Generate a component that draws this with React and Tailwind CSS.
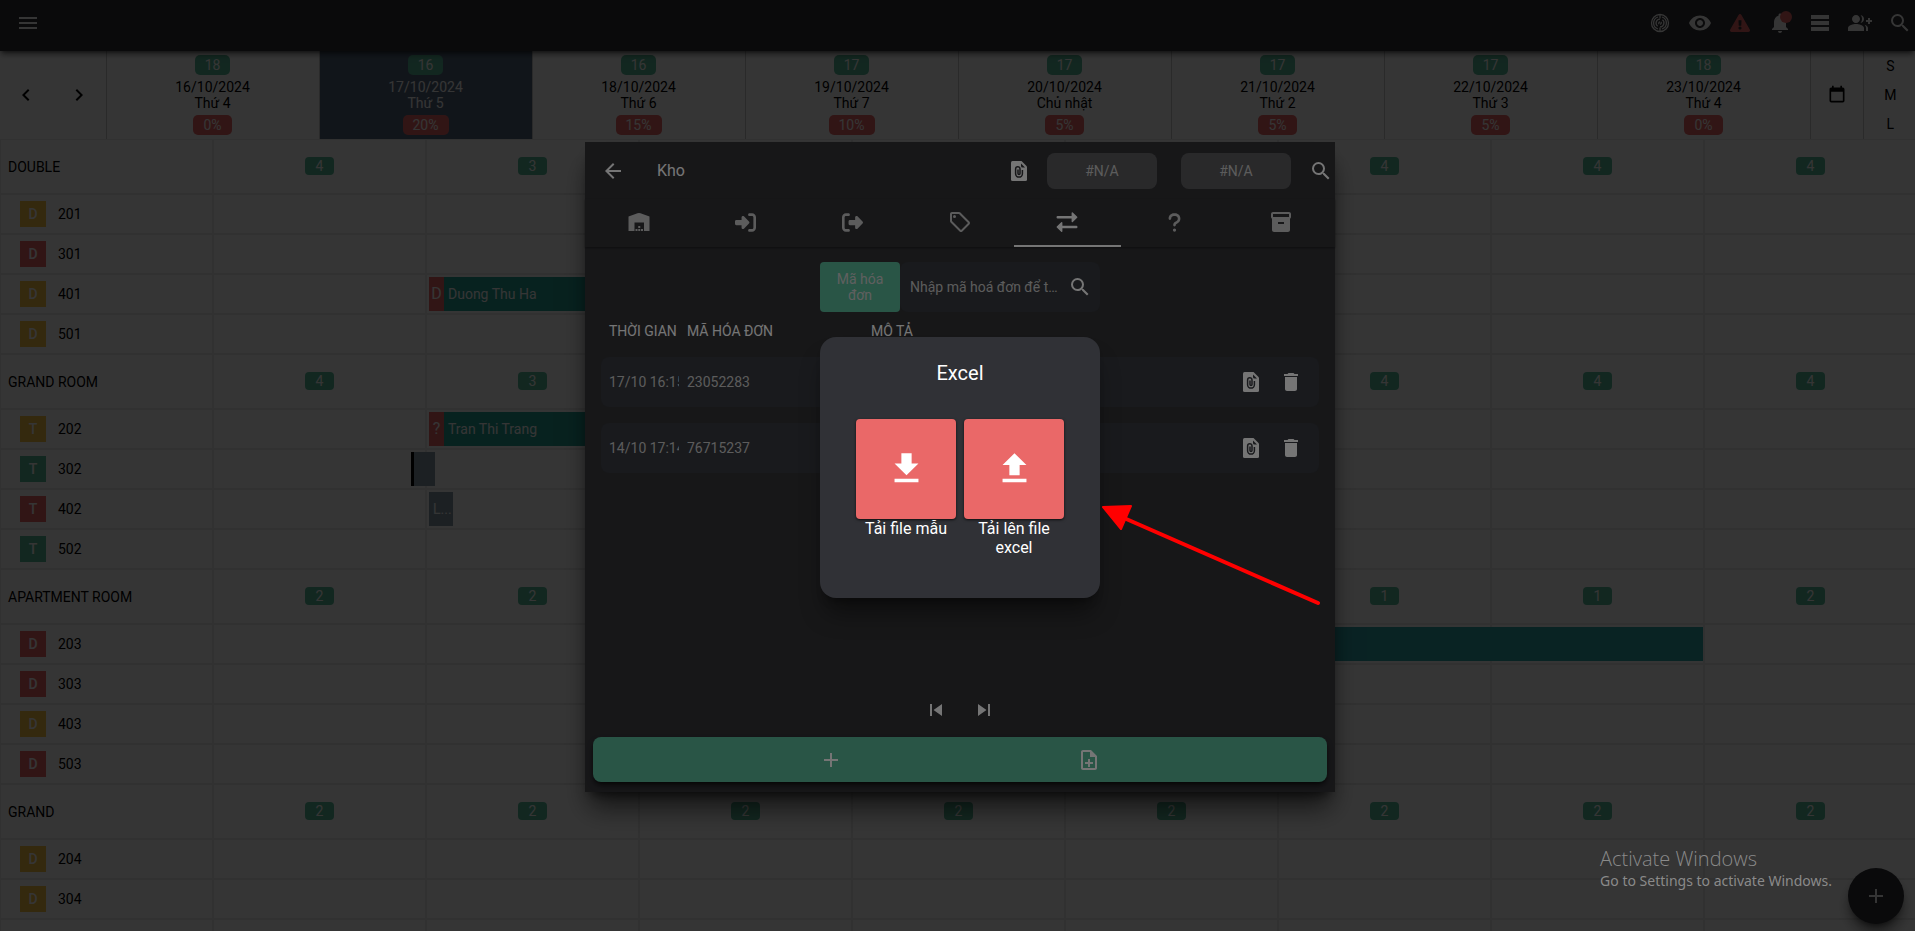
"use client";

// Purpose: Room calendar with the warehouse dialog and its Excel menu.

import {
  MdAdd,
  MdArrowBack,
  MdChevronLeft,
  MdChevronRight,
  MdDelete,
  MdFileDownload,
  MdFileUpload,
  MdGroupAdd,
  MdInventory2,
  MdMenu,
  MdNotifications,
  MdOutlineLocalOffer,
  MdOutlineNoteAdd,
  MdRemoveRedEye,
  MdSearch,
  MdSkipNext,
  MdSkipPrevious,
  MdTableRows,
} from "react-icons/md";
import { FaExclamationTriangle } from "react-icons/fa";
import {
  FaQuestion,
  FaRightFromBracket,
  FaRightToBracket,
} from "react-icons/fa6";

const days = [
  { date: "16/10/2024", name: "Thứ 4", free: 18, rate: "0%" },
  { date: "17/10/2024", name: "Thứ 5", free: 16, rate: "20%", today: true },
  { date: "18/10/2024", name: "Thứ 6", free: 16, rate: "15%" },
  { date: "19/10/2024", name: "Thứ 7", free: 17, rate: "10%" },
  { date: "20/10/2024", name: "Chủ nhật", free: 17, rate: "5%" },
  { date: "21/10/2024", name: "Thứ 2", free: 17, rate: "5%" },
  { date: "22/10/2024", name: "Thứ 3", free: 17, rate: "5%" },
  { date: "23/10/2024", name: "Thứ 4", free: 18, rate: "0%" },
];

const groups = [
  {
    name: "DOUBLE",
    free: [4, 3, 3, 3, 4, 4, 4, 4],
    rooms: [
      { id: "201", mark: "D", color: "yellow" },
      { id: "301", mark: "D", color: "red" },
      {
        id: "401",
        mark: "D",
        color: "yellow",
        booking: { day: 1, kind: "guest", tag: "D", label: "Duong Thu Ha" },
      },
      { id: "501", mark: "D", color: "yellow" },
    ],
  },
  {
    name: "GRAND ROOM",
    free: [4, 3, 3, 4, 4, 4, 4, 4],
    rooms: [
      {
        id: "202",
        mark: "T",
        color: "yellow",
        booking: { day: 1, kind: "guest", tag: "?", label: "Tran Thi Trang" },
      },
      { id: "302", mark: "T", color: "green", booking: { day: 1, kind: "block" } },
      {
        id: "402",
        mark: "T",
        color: "red",
        booking: { day: 1, kind: "short", label: "L..." },
      },
      { id: "502", mark: "T", color: "green" },
    ],
  },
  {
    name: "APARTMENT ROOM",
    free: [2, 2, 2, 1, 1, 1, 1, 2],
    rooms: [
      { id: "203", mark: "D", color: "red", booking: { day: 6, kind: "long" } },
      { id: "303", mark: "D", color: "red" },
      { id: "403", mark: "D", color: "yellow" },
      { id: "503", mark: "D", color: "red" },
    ],
  },
  {
    name: "GRAND",
    free: [2, 2, 2, 2, 2, 2, 2, 2],
    rooms: [
      { id: "204", mark: "D", color: "yellow" },
      { id: "304", mark: "D", color: "yellow" },
    ],
  },
  { name: "", free: Array(8).fill(null), rooms: [] },
];

const markColors = {
  yellow: "bg-[#f7c244]",
  red: "bg-[#ea6868]",
  green: "bg-[#59b99a]",
};

// Round signal icon in the top bar.
function SignalIcon() {
  return (
    <svg width="24" height="24" viewBox="0 0 24 24" fill="none" stroke="currentColor" strokeWidth="1.3">
      <circle cx="12" cy="12" r="8.500" />
      <path d="M12 3v4.500M12 16.500V21" />
      <path d="M10 6a6.300 6.300 0 0 0 0 12M14 6a6.300 6.300 0 0 1 0 12" />
      <path d="M12 8.200a3.900 3.900 0 0 0-2.400 7M12 15.800a3.900 3.900 0 0 0 2.400-7" />
      <path d="M10.800 13.200V12a1.200 1.200 0 0 1 1.200-1.200M13.200 10.800V12a1.200 1.200 0 0 1-1.200 1.200" />
    </svg>
  );
}

function CalendarIcon() {
  return (
    <svg width="20" height="20" viewBox="0 0 24 24" fill="currentColor">
      <path d="M19 19H5V8h14m0-5h-1V1h-2v2H8V1H6v2H5c-1.110 0-2 .89-2 2v14a2 2 0 0 0 2 2h14a2 2 0 0 0 2-2V5a2 2 0 0 0-2-2z" />
    </svg>
  );
}

// Solid page with a paper clip cut out of it.
function FileClipIcon() {
  return (
    <svg width="24" height="24" viewBox="0 0 24 24">
      <mask id="clip-cut">
        <rect width="24" height="24" fill="#fff" />
        <path
          d="M15.400 11v3.700a3.400 3.400 0 0 1-6.800 0V9.900a2.200 2.200 0 0 1 4.400 0v4.700a1 1 0 0 1-2 0V10.500"
          fill="none"
          stroke="#000"
          strokeWidth="1.500"
        />
        <path d="M14 4.500l4 4h-2.500a1.500 1.500 0 0 1-1.500-1.500z" fill="#000" />
      </mask>
      <path
        d="M14.500 2H5.500A1.500 1.500 0 0 0 4 3.500v17A1.500 1.500 0 0 0 5.500 22h13a1.500 1.500 0 0 0 1.500-1.500V7.500z"
        fill="currentColor"
        mask="url(#clip-cut)"
      />
    </svg>
  );
}

function WarehouseIcon() {
  return (
    <svg width="24" height="24" viewBox="0 0 24 24" fill="currentColor">
      <path d="M1.500 21V6.500L10.500 3.200a4 4 0 0 1 3 0L22.500 6.500V21H17v-8.500H7.500V21z" />
      <path d="M8.500 19h2v2h-2zM11.250 19h2v2h-2zM14 19h2v2h-2zM11.250 16h2v2h-2z" />
    </svg>
  );
}

function SwapIcon() {
  return (
    <svg
      width="24"
      height="24"
      viewBox="0 0 24 24"
      fill="currentColor"
      stroke="currentColor"
      strokeLinejoin="round"
      strokeLinecap="round"
    >
      <path d="M2.700 7.300H17M21.300 17H7" strokeWidth="2.400" />
      <path d="M17.300 3l4.400 4.300-4.400 4.200zM6.700 12.700L2.300 17l4.400 4.200z" strokeWidth="1.400" />
    </svg>
  );
}

const tabs = [
  { label: "Kho", icon: <WarehouseIcon /> },
  { label: "Nhập kho", icon: <FaRightToBracket size={21} /> },
  { label: "Xuất kho", icon: <FaRightFromBracket size={21} /> },
  { label: "Nhãn", icon: <MdOutlineLocalOffer size={24} /> },
  { label: "Giao dịch", icon: <SwapIcon />, active: true },
  { label: "Trợ giúp", icon: <FaQuestion size={21} /> },
  { label: "Lưu trữ", icon: <MdInventory2 size={24} /> },
];

const invoices = [
  { time: "17/10 16:15", code: "23052283" },
  { time: "14/10 17:14", code: "76715237" },
];

function IconButton({ label, children, className = "" }) {
  return (
    <button
      type="button"
      aria-label={label}
      className={`flex shrink-0 items-center justify-center ${className}`}
    >
      {children}
    </button>
  );
}

function TopBar() {
  return (
    <header className="relative flex h-[51px] shrink-0 items-center justify-between bg-[#303035] pr-[3px] pb-[5px] pl-4 text-white shadow-md shadow-black/50">
      <IconButton label="Menu">
        <MdMenu size={24} />
      </IconButton>
      <div className="flex items-center gap-4">
        <IconButton label="Tín hiệu">
          <SignalIcon />
        </IconButton>
        <IconButton label="Xem">
          <MdRemoveRedEye size={24} />
        </IconButton>
        <IconButton label="Cảnh báo" className="w-6 text-[#ea6868]">
          <FaExclamationTriangle size={20} />
        </IconButton>
        <IconButton label="Thông báo" className="relative">
          <MdNotifications size={24} />
          <span className="absolute top-0 right-0 size-3 rounded-full bg-[#ea6868]" />
        </IconButton>
        <IconButton label="Danh sách">
          <MdTableRows size={24} />
        </IconButton>
        <IconButton label="Thêm khách">
          <MdGroupAdd size={24} />
        </IconButton>
        <IconButton label="Tìm kiếm">
          <MdSearch size={24} />
        </IconButton>
      </div>
    </header>
  );
}

// Dates with free rooms on top and occupancy below.
function DayHeader() {
  return (
    <div className="grid h-[88px] grid-cols-18">
      <div className="flex items-center justify-around border-r border-[#c9c9c9]">
        <IconButton label="Ngày trước">
          <MdChevronLeft size={24} />
        </IconButton>
        <IconButton label="Ngày sau">
          <MdChevronRight size={24} />
        </IconButton>
      </div>
      {days.map((day) => (
        <div
          key={day.date}
          className={`col-span-2 flex flex-col items-center gap-1 border-r border-[#c9c9c9] py-1 text-center leading-4 ${
            day.today ? "bg-[#55687f] text-white" : ""
          }`}
        >
          <span className="rounded-[5px] bg-[#59b99a] px-[10px] leading-5 text-white">
            {day.free}
          </span>
          <div>
            <p>{day.date}</p>
            <p>{day.name}</p>
          </div>
          <span className="rounded-[5px] bg-[#ea6868] px-[10px] leading-5 text-white">
            {day.rate}
          </span>
        </div>
      ))}
      <div className="grid grid-cols-2">
        <div className="flex items-center justify-center border-r border-[#c9c9c9]">
          <IconButton label="Chọn ngày">
            <CalendarIcon />
          </IconButton>
        </div>
        <div className="flex flex-col">
          {["S", "M", "L"].map((size) => (
            <button key={size} type="button" className="flex-1">
              {size}
            </button>
          ))}
        </div>
      </div>
    </div>
  );
}

function Booking({ booking }) {
  if (booking.kind === "guest") {
    return (
      <div className="absolute top-[2px] left-[2px] flex h-[34px] w-[200px] items-center bg-[#26a195] text-white">
        <span className="flex h-full w-[15px] items-center justify-center bg-[#ea6868] text-base">
          {booking.tag}
        </span>
        <span className="pl-1">{booking.label}</span>
      </div>
    );
  }
  if (booking.kind === "block") {
    return (
      <div className="absolute top-[2px] -left-4 h-[34px] w-6 border-l-3 border-black bg-[#869cab]" />
    );
  }
  if (booking.kind === "short") {
    return (
      <div className="absolute top-[2px] left-[2px] h-[34px] w-6 bg-[#869cab] pl-1 leading-[34px] text-white">
        {booking.label}
      </div>
    );
  }
  return <div className="absolute top-[2px] right-0 h-[34px] w-[600px] bg-[#2fa5aa]" />;
}

function RoomGrid() {
  return (
    <table className="w-full table-fixed border-separate border-spacing-0">
      {groups.map((group) => (
        <tbody key={group.name}>
          <tr className="h-[55px]">
            <th className="border border-[#ebebeb] px-[7px] text-left font-normal">
              {group.name}
            </th>
            {group.free.map((count, i) => (
              <td key={i} className="border border-[#ebebeb] p-0 pb-[2px] text-center">
                {count !== null && (
                  <span className="inline-block rounded-[4px] bg-[#59b99a] px-[11px] leading-[18px] text-white">
                    {count}
                  </span>
                )}
              </td>
            ))}
          </tr>
          {group.rooms.map((room) => (
            <tr key={room.id} className="h-10">
              <th className="border border-[#ebebeb] py-0 pl-[19px] font-normal">
                <div className="flex items-center gap-3">
                  <span
                    className={`flex size-[26px] items-center justify-center font-medium text-white ${markColors[room.color]}`}
                  >
                    {room.mark}
                  </span>
                  {room.id}
                </div>
              </th>
              {days.map((day, i) =>
                room.booking?.day === i ? (
                  <td key={day.date} className="relative border border-[#ebebeb] p-0">
                    <Booking booking={room.booking} />
                  </td>
                ) : (
                  <td key={day.date} className="border border-[#ebebeb] p-0" />
                )
              )}
            </tr>
          ))}
        </tbody>
      ))}
    </table>
  );
}

function InvoiceTable() {
  return (
    <table className="-mt-[7px] w-full table-fixed border-separate border-spacing-x-0 border-spacing-y-4 text-left">
      <colgroup>
        <col className="w-[78px]" />
        <col className="w-[184px]" />
        <col />
        <col className="w-[100px]" />
      </colgroup>
      <thead>
        <tr className="leading-5 whitespace-nowrap">
          <th className="p-0 pl-2 font-normal">THỜI GIAN</th>
          <th className="p-0 pl-2 font-normal">MÃ HÓA ĐƠN</th>
          <th className="p-0 pl-2 font-normal">MÔ TẢ</th>
          <th className="p-0" aria-label="Thao tác" />
        </tr>
      </thead>
      <tbody>
        {invoices.map((invoice) => (
          <tr key={invoice.code} className="h-[50px] text-[#c8c8c8]">
            <td className="overflow-hidden rounded-l-lg bg-[#37393f] p-0 pl-2 whitespace-nowrap">
              {invoice.time}
            </td>
            <td className="bg-[#37393f] p-0 pl-2">{invoice.code}</td>
            <td className="bg-[#37393f] p-0 pl-2" />
            <td className="rounded-r-lg bg-[#37393f] p-0 pr-4 text-white">
              <div className="flex justify-end gap-4">
                <IconButton label="Tệp đính kèm">
                  <FileClipIcon />
                </IconButton>
                <IconButton label="Xóa">
                  <MdDelete size={24} />
                </IconButton>
              </div>
            </td>
          </tr>
        ))}
      </tbody>
    </table>
  );
}

function WarehouseDialog() {
  return (
    <section
      role="dialog"
      aria-label="Kho"
      className="flex h-[650px] w-[750px] flex-col bg-[#323236] text-white shadow-xl shadow-black/60"
    >
      <div className="flex h-[57px] items-center pr-[2px] pl-4">
        <IconButton label="Quay lại">
          <MdArrowBack size={24} />
        </IconButton>
        <h2 className="grow pl-8 text-base">Kho</h2>
        <IconButton label="Tệp đính kèm">
          <FileClipIcon />
        </IconButton>
        <div className="ml-4 flex gap-6 text-[#c8c8c8]">
          <button type="button" className="h-9 w-[110px] rounded-lg bg-[#5b5b5d]">
            #N/A
          </button>
          <button type="button" className="h-9 w-[110px] rounded-lg bg-[#5b5b5d]">
            #N/A
          </button>
        </div>
        <IconButton label="Tìm kiếm" className="ml-[18px]">
          <MdSearch size={24} />
        </IconButton>
      </div>

      <div role="tablist" className="flex h-12 shadow-[0_1px_2px_rgba(0,0,0,0.4)]">
        {tabs.map((tab) => (
          <button
            key={tab.label}
            type="button"
            role="tab"
            aria-label={tab.label}
            aria-selected={!!tab.active}
            className={`flex flex-1 items-center justify-center border-b-2 ${
              tab.active ? "border-white" : "border-transparent text-[#c8c8c8]"
            }`}
          >
            {tab.icon}
          </button>
        ))}
      </div>

      <div className="flex grow flex-col px-4 pt-[15px]">
        <form className="flex h-[50px] w-[280px] self-center">
          <button
            type="button"
            className="w-20 rounded-[4px] bg-[#59b99a] px-3 leading-4 text-[#d0d0d0]"
          >
            Mã hóa đơn
          </button>
          <div className="flex grow items-center rounded-lg bg-[#37393f] pr-2 pl-[10px]">
            <input
              type="text"
              aria-label="Mã hoá đơn"
              placeholder="Nhập mã hoá đơn để tìm kiếm"
              className="w-0 grow bg-transparent text-ellipsis outline-none placeholder:text-[#c8c8c8]"
            />
            <IconButton label="Tìm hóa đơn" className="ml-2">
              <MdSearch size={24} />
            </IconButton>
          </div>
        </form>
        <InvoiceTable />
        <div className="mt-auto mb-[15px] flex justify-center gap-6">
          <IconButton label="Trang trước">
            <MdSkipPrevious size={24} />
          </IconButton>
          <IconButton label="Trang sau">
            <MdSkipNext size={24} />
          </IconButton>
        </div>
      </div>

      <div className="mx-2 mb-[10px] flex h-[45px] shrink-0 justify-evenly rounded-lg bg-[#59b99a] shadow-md shadow-black/60">
        <IconButton label="Thêm" className="w-10">
          <MdAdd size={24} />
        </IconButton>
        <IconButton label="Thêm từ tệp" className="w-10">
          <MdOutlineNoteAdd size={24} />
        </IconButton>
      </div>
    </section>
  );
}

function ExcelAction({ label, children }) {
  return (
    <button type="button" className="flex w-[100px] flex-col text-base leading-[19px]">
      <span className="flex h-[100px] w-full items-center justify-center rounded-[4px] bg-[#ea6868] shadow-sm shadow-black/60">
        {children}
      </span>
      <span className="w-full text-center">{label}</span>
    </button>
  );
}

function ExcelDialog() {
  return (
    <section
      role="dialog"
      aria-label="Excel"
      className="relative flex h-[261px] w-[280px] flex-col items-center rounded-2xl bg-[#303136] pt-5 text-white shadow-xl shadow-black/40"
    >
      <h3 className="text-xl leading-8">Excel</h3>
      <div className="mt-[30px] flex items-start gap-2">
        <ExcelAction label="Tải file mẫu">
          <MdFileDownload size={41} />
        </ExcelAction>
        <ExcelAction label="Tải lên file excel">
          <MdFileUpload size={41} />
        </ExcelAction>
      </div>
      {/* Pointer to the upload action */}
      <svg
        className="pointer-events-none absolute top-[165px] left-[280px]"
        width="224"
        height="108"
        viewBox="0 0 224 108"
        fill="#ff0000"
        stroke="#ff0000"
        strokeLinejoin="round"
        strokeLinecap="round"
      >
        <path d="M24 16L218 101" strokeWidth="4" />
        <path d="M3 5L31 4L21 27Z" strokeWidth="2" />
      </svg>
    </section>
  );
}

// Render the calendar page with both dialogs open.
export default function App() {
  return (
    <div className="relative h-screen overflow-hidden bg-white font-[Roboto,sans-serif] text-sm text-black">
      <TopBar />
      <main className="-mr-[2px]">
        <DayHeader />
        <RoomGrid />
      </main>

      <button
        type="button"
        aria-label="Thêm đặt phòng"
        className="absolute right-[11px] bottom-[7px] flex size-14 items-center justify-center rounded-full bg-[#303035] text-white shadow-lg shadow-black/60"
      >
        <MdAdd size={24} />
      </button>

      <div className="absolute inset-0 flex items-center justify-center bg-black/54 pt-[3px] pl-[5px]">
        <WarehouseDialog />
      </div>
      <div className="absolute inset-0 flex items-center justify-center bg-black/54 pt-[3px] pl-[5px]">
        <ExcelDialog />
      </div>

      <div className="pointer-events-none absolute right-[83px] bottom-10 text-[#8a8a8a]">
        <p className="font-['Open_Sans',sans-serif] text-xl leading-6 font-light">
          Activate Windows
        </p>
        <p className="font-['Noto_Sans',sans-serif] leading-5">
          Go to Settings to activate Windows.
        </p>
      </div>
    </div>
  );
}
